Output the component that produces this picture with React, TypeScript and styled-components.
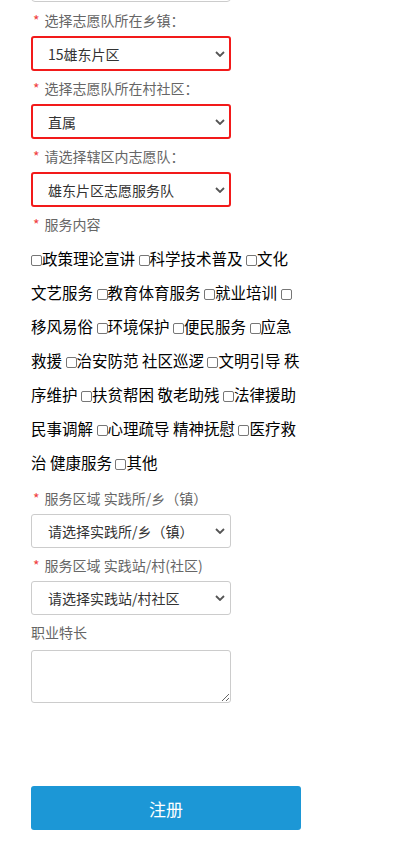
import React from 'react';
import styled, { createGlobalStyle } from 'styled-components';

const GlobalStyle = createGlobalStyle`
  html, body {
    margin: 0;
    padding: 0;
    background: #fff;
  }
  body {
    font-family: "Noto Sans CJK SC", "Noto Sans", sans-serif;
  }
`;

const Page = styled.div`
  width: 270px;
  padding: 0 0 40px 31px;
  display: flex;
  flex-direction: column;
`;

// the input above the fold, only its lower edge shows
const TopInput = styled.div`
  height: 34px;
  margin-top: -34px;
  width: 198px;
  border: 1px solid #ccc;
  border-radius: 4px;
`;

const Label = styled.div<{ $first?: boolean }>`
  margin: ${({ $first }) => ($first ? 8 : 7)}px 0 6px;
  height: 20px;
  font-size: 14px;
  line-height: 20px;
  color: #666;
  white-space: nowrap;
`;

const Star = styled.span`
  color: #f04040;
  margin: 0 5px 0 2px;
`;

const SelectWrap = styled.div`
  position: relative;
  width: 200px;
`;

const Select = styled.select<{ $alert?: boolean }>`
  display: block;
  appearance: none;
  -webkit-appearance: none;
  box-sizing: border-box;
  width: 100%;
  height: ${({ $alert }) => ($alert ? 35 : 34)}px;
  padding: 0 28px 0 ${({ $alert }) => ($alert ? 15 : 16)}px;
  border: ${({ $alert }) => ($alert ? '2px solid #f21a1a' : '1px solid #ccc')};
  border-radius: 3px;
  background: #fff;
  font-family: inherit;
  font-size: 14px;
  color: #333;
  outline: none;
`;

const Chevron = styled.svg`
  position: absolute;
  right: 6px;
  top: 50%;
  width: 10px;
  height: 6px;
  margin-top: -3px;
  pointer-events: none;
`;

const Checks = styled.div`
  margin: 1px 0 2px;
  font-size: 15.5px;
  line-height: 34px;
  color: #000;
  word-break: break-all;
`;

const Box = styled.input`
  appearance: none;
  -webkit-appearance: none;
  box-sizing: border-box;
  width: 11px;
  height: 11px;
  margin: 0;
  border: 1px solid #767676;
  border-radius: 2px;
  vertical-align: -1px;
  background: #fff;
`;

const TextArea = styled.textarea`
  display: block;
  box-sizing: border-box;
  width: 200px;
  height: 53px;
  margin-top: 2px;
  border: 1px solid #ccc;
  border-radius: 3px;
  font-family: inherit;
  outline: none;
`;

const Submit = styled.button`
  margin-top: 83px;
  width: 270px;
  height: 44px;
  border: none;
  border-radius: 3px;
  background: #1c97d6;
  color: #fff;
  font-family: inherit;
  font-size: 17px;
`;

const services = [
  '政策理论宣讲', '科学技术普及', '文化文艺服务', '教育体育服务', '就业培训', '移风易俗',
  '环境保护', '便民服务', '应急救援', '治安防范 社区巡逻', '文明引导 秩序维护',
  '扶贫帮困 敬老助残', '法律援助 民事调解', '心理疏导 精神抚慰', '医疗救治 健康服务', '其他',
];

const Field = ({ text, star = true, first }: { text: string; star?: boolean; first?: boolean }) => (
  <Label $first={first}>
    {star && <Star>*</Star>}
    {text}
  </Label>
);

const Dropdown = ({ value, alert }: { value: string; alert?: boolean }) => (
  <SelectWrap>
    <Select $alert={alert} defaultValue={value}>
      <option>{value}</option>
    </Select>
    <Chevron viewBox="0 0 10 6">
      <path d="M1 1l4 4 4-4" fill="none" stroke="#555" strokeWidth="1.8" />
    </Chevron>
  </SelectWrap>
);

export default function App() {
  return (
    <>
      <GlobalStyle />
      <Page>
        <TopInput />
        <Field first text="选择志愿队所在乡镇：" />
        <Dropdown alert value="15雄东片区" />
        <Field text="选择志愿队所在村社区：" />
        <Dropdown alert value="直属" />
        <Field text="请选择辖区内志愿队：" />
        <Dropdown alert value="雄东片区志愿服务队" />
        <Field text="服务内容" />
        <Checks>
          {services.map((s, i) => (
            <React.Fragment key={s}>
              <Box type="checkbox" />
              {s}
              {i < services.length - 1 ? ' ' : ''}
            </React.Fragment>
          ))}
        </Checks>
        <Field text="服务区域 实践所/乡（镇）" />
        <Dropdown value="请选择实践所/乡（镇）" />
        <Field text="服务区域 实践站/村(社区)" />
        <Dropdown value="请选择实践站/村社区" />
        <Field star={false} text="职业特长" />
        <TextArea />
        <Submit>注册</Submit>
      </Page>
    </>
  );
}
